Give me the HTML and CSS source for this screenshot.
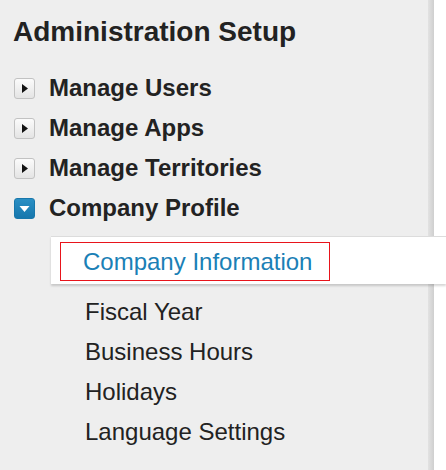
FILE: index.html
```html
<!DOCTYPE html>
<html lang="en">
<head>
<meta charset="utf-8">
<title>Administration Setup</title>
<link rel="stylesheet" href="styles.css">
</head>
<body>
<aside class="sidebar">
  <h1 class="title">Administration Setup</h1>
  <ul class="menu">
    <li class="menu-item">
      <span class="toggle">
        <svg viewBox="0 0 21 21" width="21" height="21"><path d="M8 6 L14 10.5 L8 15 Z" fill="#111"/></svg>
      </span>
      <span class="menu-label">Manage Users</span>
    </li>
    <li class="menu-item">
      <span class="toggle">
        <svg viewBox="0 0 21 21" width="21" height="21"><path d="M8 6 L14 10.5 L8 15 Z" fill="#111"/></svg>
      </span>
      <span class="menu-label">Manage Apps</span>
    </li>
    <li class="menu-item">
      <span class="toggle">
        <svg viewBox="0 0 21 21" width="21" height="21"><path d="M8 6 L14 10.5 L8 15 Z" fill="#111"/></svg>
      </span>
      <span class="menu-label">Manage Territories</span>
    </li>
    <li class="menu-item">
      <span class="toggle toggle-open">
        <svg viewBox="0 0 21 21" width="21" height="21"><path d="M5.5 8 L15.5 8 L10.5 14 Z" fill="#fff"/></svg>
      </span>
      <span class="menu-label">Company Profile</span>
    </li>
  </ul>
  <ul class="submenu">
    <li class="sub-item sub-active"><a class="sub-link">Company Information</a></li>
    <li class="sub-item">Fiscal Year</li>
    <li class="sub-item">Business Hours</li>
    <li class="sub-item">Holidays</li>
    <li class="sub-item">Language Settings</li>
  </ul>
</aside>
</body>
</html>
```

FILE: styles.css
```css
html, body {
  margin: 0;
  padding: 0;
  background: #ffffff;
}

body {
  font-family: "Liberation Sans", Arial, Helvetica, sans-serif;
  color: #222222;
  overflow: hidden;
}

.sidebar {
  width: 434px;
  height: 470px;
  background: linear-gradient(to right, #eeeeee 0, #eeeeee 428px, #e2e2e2 428px, #cfcfcf 434px);
  box-sizing: border-box;
}

.title {
  margin: 0;
  padding: 16px 0 0 13px;
  font-size: 28px;
  line-height: 32px;
  font-weight: bold;
  color: #222222;
}

.menu {
  list-style: none;
  margin: 20px 0 0 0;
  padding: 0;
}

.menu-item {
  display: flex;
  align-items: center;
  height: 40px;
  padding-left: 14px;
  font-size: 24px;
  font-weight: bold;
  line-height: 40px;
}

.toggle {
  display: flex;
  width: 21px;
  height: 21px;
  margin-right: 14px;
  box-sizing: border-box;
  border: 1px solid #c2c2c2;
  border-radius: 3px;
  background: linear-gradient(to bottom, #fbfbfb, #e4e4e4);
  align-items: center;
  justify-content: center;
}

.toggle svg {
  display: block;
  flex: none;
}

.toggle-open {
  border-color: #1877ab;
  background: linear-gradient(to bottom, #2a8fc4, #1677ad);
}

.submenu {
  list-style: none;
  margin: 8px 0 0 51px;
  padding: 0;
}

.sub-item {
  height: 40px;
  padding-left: 34px;
  font-size: 24px;
  line-height: 40px;
  color: #222222;
}

.sub-active {
  height: auto;
  margin: 0 -12px 8px 0;
  padding: 5px 0 3px 9px;
  background: #ffffff;
  border-top: 1px solid #dcdcdc;
  box-shadow: 0 2px 2px rgba(0, 0, 0, 0.16);
}

.sub-link {
  display: block;
  width: 270px;
  height: 39px;
  box-sizing: border-box;
  border: 1px solid #e8141b;
  padding-left: 22px;
  line-height: 37px;
  color: #1a80b6;
  text-decoration: none;
}
```
